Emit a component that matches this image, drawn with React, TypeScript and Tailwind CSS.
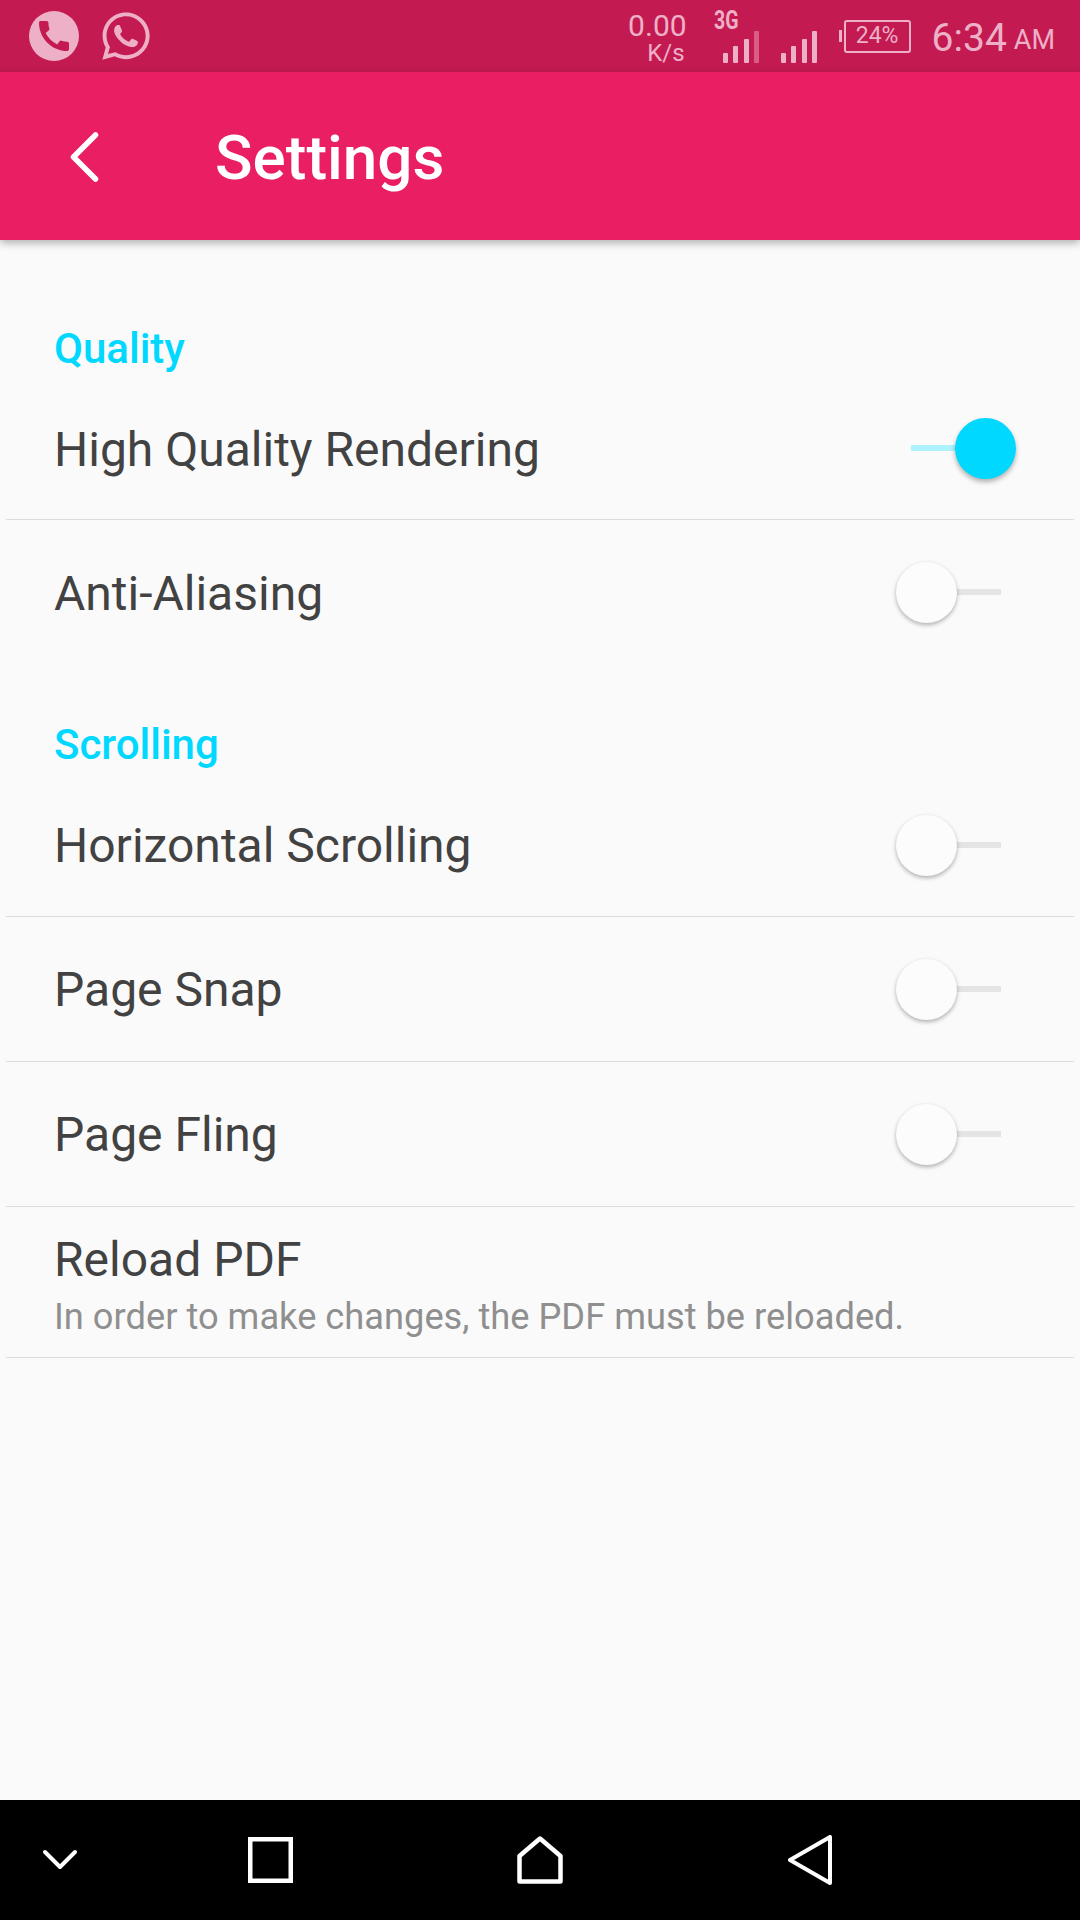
import { FaWhatsapp } from "react-icons/fa";
import { MdCall } from "react-icons/md";

function Toggle({ on = false }: { on?: boolean }) {
  if (on) {
    return (
      <div className="relative h-[61px] w-[105px]">
        <div className="absolute left-0 top-[27px] h-[6px] w-[50px] bg-[#adf2fe]" />
        <div className="absolute right-0 top-0 h-[61px] w-[61px] rounded-full bg-[#00d8ff] shadow-[0_3px_5px_rgba(0,0,0,0.3)]" />
      </div>
    );
  }
  return (
    <div className="relative h-[61px] w-[105px]">
      <div className="absolute right-0 top-[27px] h-[6px] w-[50px] bg-[#e4e4e4]" />
      <div className="absolute left-0 top-0 h-[61px] w-[61px] rounded-full bg-[#fcfcfc] shadow-[0_2px_4px_rgba(0,0,0,0.3)]" />
    </div>
  );
}

function Row({ label, on, className }: { label: string; on?: boolean; className: string }) {
  return (
    <div className={`mx-[6px] flex items-center justify-between pl-[48px] ${on ? "pr-[58px]" : "pr-[73px]"} ${className}`}>
      <span className="mt-[2px] text-[48px] leading-none text-[#424242]">{label}</span>
      <Toggle on={on} />
    </div>
  );
}

function Bars({ dimLast }: { dimLast?: boolean }) {
  return (
    <svg width="36" height="32" viewBox="0 0 36 32" fill="#eeb0c6">
      <rect x="0" y="22" width="5" height="10" rx="1" />
      <rect x="10" y="15" width="5" height="17" rx="1" />
      <rect x="21" y="8" width="5" height="24" rx="1" />
      <rect x="31" y="0" width="5" height="32" rx="1" fill={dimLast ? "#dc5c88" : "#eeb0c6"} />
    </svg>
  );
}

export default function App() {
  return (
    <div className="flex h-[1920px] w-[1080px] flex-col overflow-hidden bg-[#fafafa] font-['Roboto',sans-serif]">
      {/* status bar */}
      <div className="flex h-[72px] shrink-0 items-center bg-[#c41a52] pl-[29px] pr-[25px] text-[#eeb0c6]">
        <div className="flex h-[50px] w-[50px] items-center justify-center rounded-full bg-[#eeb0c6]">
          <MdCall className="h-[40px] w-[40px] text-[#c41a52]" />
        </div>
        <FaWhatsapp className="ml-[20px] h-[54px] w-[54px]" />
        <div className="ml-auto mr-[27px] mt-[3px] flex flex-col items-end">
          <span className="text-[30px] leading-[30px]">0.00</span>
          <span className="mr-[2px] text-[24px] leading-[24px]">K/s</span>
        </div>
        <div className="relative h-[54px] w-[45px]">
          <span className="absolute left-0 top-[-2px] origin-left scale-x-75 text-[26px] font-bold leading-[26px]">3G</span>
          <div className="absolute bottom-0 right-0">
            <Bars dimLast />
          </div>
        </div>
        <div className="ml-[22px] mt-[22px]">
          <Bars />
        </div>
        <div className="ml-[22px] flex items-center">
          <div className="h-[12px] w-[3px] bg-[#eeb0c6]" />
          <div className="ml-[2px] flex h-[33px] w-[67px] items-center justify-center rounded-[3px] border-2 border-[#eeb0c6] text-[23px]">
            24%
          </div>
        </div>
        <span className="ml-[21px] mt-[4px] text-[39px] leading-none">6:34</span>
        <span className="ml-[7px] mt-[8px] text-[27px] leading-none">AM</span>
      </div>

      {/* app bar */}
      <div className="relative flex h-[168px] shrink-0 items-center bg-[#e91e63] shadow-[0_3px_8px_rgba(0,0,0,0.3)]">
        <svg className="ml-[66px] mt-[2px]" width="36" height="56" viewBox="0 0 36 56" fill="none" stroke="#fff" strokeWidth="5.5" strokeLinecap="round" strokeLinejoin="round">
          <path d="M29.5 6 L7.5 28 L29.5 50" />
        </svg>
        <span className="ml-[113px] mt-[4px] text-[62px] font-medium leading-none text-white">Settings</span>
      </div>

      {/* list */}
      <div className="flex-1 pt-[87px]">
        <div className="mb-[7px] pl-[54px] text-[42px] font-medium leading-[44px] text-[#00d8ff]">Quality</div>
        <Row label="High Quality Rendering" on className="h-[142px] border-b border-[#dcdcdc]" />
        <Row label="Anti-Aliasing" className="h-[145px]" />
        <div className="mb-[7px] mt-[58px] pl-[54px] text-[42px] font-medium leading-[44px] text-[#00d8ff]">Scrolling</div>
        <Row label="Horizontal Scrolling" className="h-[143px] border-b border-[#dcdcdc]" />
        <Row label="Page Snap" className="h-[145px] border-b border-[#dcdcdc]" />
        <Row label="Page Fling" className="h-[145px] border-b border-[#dcdcdc]" />
        <div className="mx-[6px] flex h-[151px] flex-col border-b border-[#dcdcdc] pl-[48px] pt-[25px]">
          <span className="text-[48px] leading-[56px] text-[#424242]">Reload PDF</span>
          <span className="mt-[7px] text-[36.25px] leading-[44px] text-[#8f8f8f]">In order to make changes, the PDF must be reloaded.</span>
        </div>
      </div>

      {/* nav bar */}
      <div className="flex h-[120px] shrink-0 items-center bg-black">
        <svg className="ml-[42px]" width="36" height="22" viewBox="0 0 36 22" fill="none" stroke="#fff" strokeWidth="4" strokeLinecap="round" strokeLinejoin="round">
          <path d="M3 3 L18 18 L33 3" />
        </svg>
        <svg className="ml-[170px]" width="45" height="46" viewBox="0 0 45 46" fill="none" stroke="#fff" strokeWidth="4.5">
          <rect x="2.25" y="2.25" width="40.5" height="41.5" />
        </svg>
        <svg className="ml-[224px]" width="46" height="48" viewBox="0 0 46 48" fill="none" stroke="#fff" strokeWidth="4.5" strokeLinejoin="round">
          <path d="M23 2.5 L43.5 20 V45.5 H2.5 V20 Z" />
        </svg>
        <svg className="ml-[225px]" width="44" height="50" viewBox="0 0 44 50" fill="none" stroke="#fff" strokeWidth="4" strokeLinejoin="round">
          <path d="M42 2 V48 L2 25 Z" />
        </svg>
      </div>
    </div>
  );
}
